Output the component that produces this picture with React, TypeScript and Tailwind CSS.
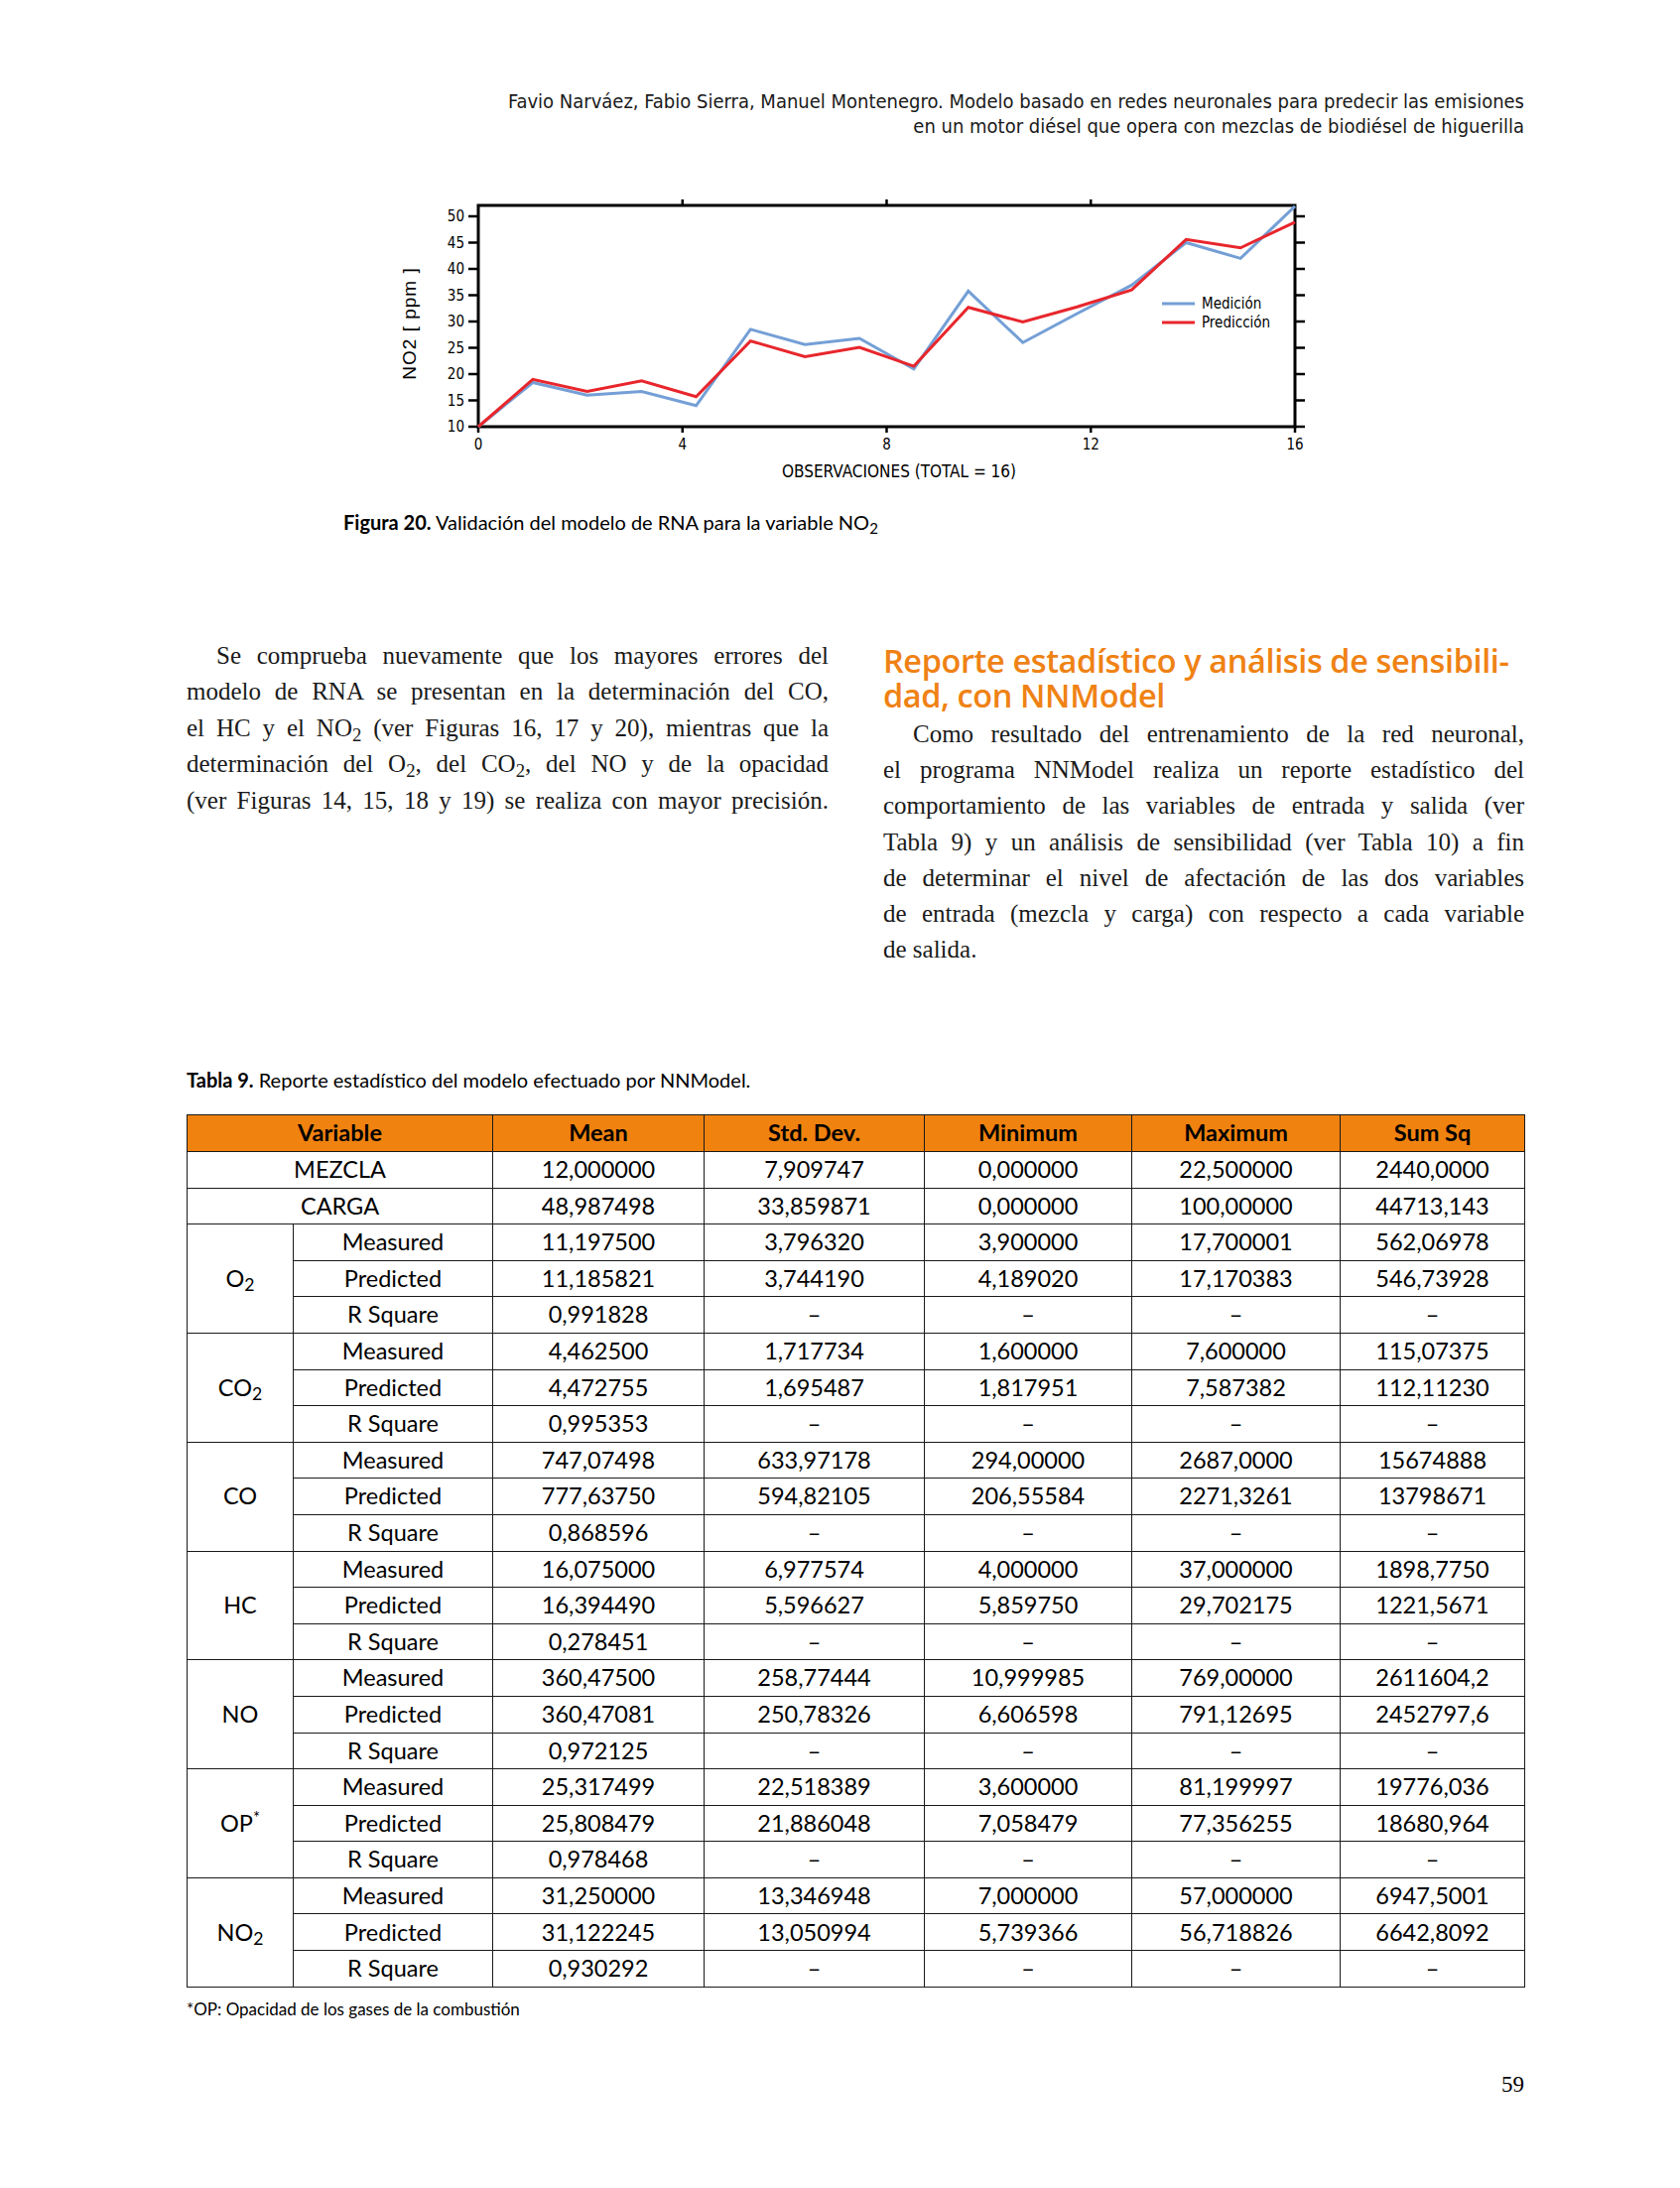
const narrow = "font-['Liberation_Sans_Narrow','DejaVu_Sans_Condensed','Roboto_Condensed',Lato,sans-serif]"

const medicion = [10, 18.4, 16.0, 16.7, 14.0, 28.5, 25.6, 26.8, 21.0, 35.8, 26.0, 31.5, 36.9, 45.0, 42.0, 51.9]
const prediccion = [10, 19.0, 16.7, 18.7, 15.7, 26.3, 23.3, 25.1, 21.5, 32.7, 29.9, 32.8, 36.0, 45.6, 44.0, 48.9]

const X0 = 102
const X1 = 925
const Y10 = 240
const PER = 5.3
const px = (i: number) => X0 + (i * (X1 - X0)) / 15
const py = (v: number) => Y10 - (v - 10) * PER
const pts = (d: number[]) => d.map((v, i) => `${px(i).toFixed(1)},${py(v).toFixed(1)}`).join(' ')

function Chart() {
  const yTicks = [10, 15, 20, 25, 30, 35, 40, 45, 50]
  const xTicks = [0, 4, 8, 12, 16]
  const xAt = (t: number) => X0 + (t / 16) * (X1 - X0)
  return (
    <svg width="960" height="300" viewBox="0 0 960 300" className="block">
      <rect x={X0} y={17} width={X1 - X0} height={Y10 - 17} fill="none" stroke="#000" strokeWidth="3" />
      {yTicks.map((t) => (
        <g key={t}>
          <line x1={X0 - 10} x2={X0} y1={py(t)} y2={py(t)} stroke="#000" strokeWidth="2.5" />
          <line x1={X1} x2={X1 + 10} y1={py(t)} y2={py(t)} stroke="#000" strokeWidth="2.5" />
          <text x={X0 - 14} y={py(t) + 5} textAnchor="end" fontSize="15" className={narrow}>
            {t}
          </text>
        </g>
      ))}
      {xTicks.map((t) => (
        <g key={t}>
          <line x1={xAt(t)} x2={xAt(t)} y1={Y10} y2={Y10 + 6} stroke="#000" strokeWidth="2.5" />
          {t > 0 && t < 16 && <line x1={xAt(t)} x2={xAt(t)} y1={11} y2={17} stroke="#000" strokeWidth="2.5" />}
          <text x={xAt(t)} y={Y10 + 23} textAnchor="middle" fontSize="15" className={narrow}>
            {t}
          </text>
        </g>
      ))}
      <polyline points={pts(medicion)} fill="none" stroke="#749fd6" strokeWidth="3" strokeLinejoin="miter" />
      <polyline points={pts(prediccion)} fill="none" stroke="#e8262c" strokeWidth="3" strokeLinejoin="miter" />
      <line x1={791} x2={824} y1={116} y2={116} stroke="#749fd6" strokeWidth="3" />
      <line x1={791} x2={824} y1={135} y2={135} stroke="#e8262c" strokeWidth="3" />
      <text x={831} y={121} fontSize="15" className={narrow}>Medición</text>
      <text x={831} y={140} fontSize="15" className={narrow}>Predicción</text>
      <text x={526} y={291} textAnchor="middle" fontSize="17" className={narrow}>
        OBSERVACIONES (TOTAL = 16)
      </text>
      <text
        x={34}
        y={136}
        textAnchor="middle"
        fontSize="19"
        letterSpacing="1"
        transform="rotate(-90 34 136)"
        dominantBaseline="middle"
        className="font-['Liberation_Sans',sans-serif]"
      >
        NO2 [ ppm ]
      </text>
    </svg>
  )
}

function Line({ children, last = false, indent = false }: { children: React.ReactNode; last?: boolean; indent?: boolean }) {
  return (
    <div className={`${last ? 'text-left' : 'text-justify [text-align-last:justify]'} ${indent ? 'pl-[30px]' : ''} whitespace-nowrap`}>
      {children}
    </div>
  )
}

type Row = [string, string, string, string, string, string]
const groups: { name: React.ReactNode; rows: Row[] }[] = [
  {
    name: (
      <>
        O<sub>2</sub>
      </>
    ),
    rows: [
      ['Measured', '11,197500', '3,796320', '3,900000', '17,700001', '562,06978'],
      ['Predicted', '11,185821', '3,744190', '4,189020', '17,170383', '546,73928'],
      ['R Square', '0,991828', '–', '–', '–', '–'],
    ],
  },
  {
    name: (
      <>
        CO<sub>2</sub>
      </>
    ),
    rows: [
      ['Measured', '4,462500', '1,717734', '1,600000', '7,600000', '115,07375'],
      ['Predicted', '4,472755', '1,695487', '1,817951', '7,587382', '112,11230'],
      ['R Square', '0,995353', '–', '–', '–', '–'],
    ],
  },
  {
    name: 'CO',
    rows: [
      ['Measured', '747,07498', '633,97178', '294,00000', '2687,0000', '15674888'],
      ['Predicted', '777,63750', '594,82105', '206,55584', '2271,3261', '13798671'],
      ['R Square', '0,868596', '–', '–', '–', '–'],
    ],
  },
  {
    name: 'HC',
    rows: [
      ['Measured', '16,075000', '6,977574', '4,000000', '37,000000', '1898,7750'],
      ['Predicted', '16,394490', '5,596627', '5,859750', '29,702175', '1221,5671'],
      ['R Square', '0,278451', '–', '–', '–', '–'],
    ],
  },
  {
    name: 'NO',
    rows: [
      ['Measured', '360,47500', '258,77444', '10,999985', '769,00000', '2611604,2'],
      ['Predicted', '360,47081', '250,78326', '6,606598', '791,12695', '2452797,6'],
      ['R Square', '0,972125', '–', '–', '–', '–'],
    ],
  },
  {
    name: (
      <>
        OP<sup className="text-[0.7em] -top-[0.5em]">*</sup>
      </>
    ),
    rows: [
      ['Measured', '25,317499', '22,518389', '3,600000', '81,199997', '19776,036'],
      ['Predicted', '25,808479', '21,886048', '7,058479', '77,356255', '18680,964'],
      ['R Square', '0,978468', '–', '–', '–', '–'],
    ],
  },
  {
    name: (
      <>
        NO<sub>2</sub>
      </>
    ),
    rows: [
      ['Measured', '31,250000', '13,346948', '7,000000', '57,000000', '6947,5001'],
      ['Predicted', '31,122245', '13,050994', '5,739366', '56,718826', '6642,8092'],
      ['R Square', '0,930292', '–', '–', '–', '–'],
    ],
  },
]

const td = 'border border-[#1a1a1a] h-[36.6px] p-0 text-center align-middle'

function App() {
  return (
    <div className="w-[1693px] h-[2205px] bg-white text-black">
      <div className="pl-[188px] pr-[157px] pt-[90px]">
        {/* running head */}
        <div className={`${narrow} text-right text-[20px] leading-[25px] text-[#1a1a1a]`}>
          <div>Favio Narváez, Fabio Sierra, Manuel Montenegro. Modelo basado en redes neuronales para predecir las emisiones</div>
          <div>en un motor diésel que opera con mezclas de biodiésel de higuerilla</div>
        </div>

        {/* figure */}
        <div className="mt-[50px] ml-[192px]">
          <Chart />
        </div>
        <div className="mt-[24px] ml-[158px] font-['Lato',sans-serif] text-[20px] leading-[24px]">
          <span className="font-bold">Figura 20.</span> Validación del modelo de RNA para la variable NO<sub>2</sub>
        </div>

        {/* two columns */}
        <div className="mt-[105px] flex gap-[55px] font-['Liberation_Serif',serif] text-[25px] leading-[36.4px] text-[#1a1a1a]">
          <div className="w-[647px]">
            <Line indent>Se comprueba nuevamente que los mayores errores del</Line>
            <Line>modelo de RNA se presentan en la determinación del CO,</Line>
            <Line>
              el HC y el NO<sub>2</sub> (ver Figuras 16, 17 y 20), mientras que la
            </Line>
            <Line>
              determinación del O<sub>2</sub>, del CO<sub>2</sub>, del NO y de la opacidad
            </Line>
            <Line>(ver Figuras 14, 15, 18 y 19) se realiza con mayor precisión.</Line>
          </div>
          <div className="w-[646px] pt-[5px]">
            <h2 className="whitespace-nowrap font-['Open_Sans',sans-serif] font-semibold text-[32.5px] leading-[35px] tracking-[-0.4px] text-[#ef8214]">
              <div>Reporte estadístico y análisis de sensibili-</div>
              <div>dad, con NNModel</div>
            </h2>
            <div className="mt-[4px] leading-[36.2px]">
              <Line indent>Como resultado del entrenamiento de la red neuronal,</Line>
              <Line>el programa NNModel realiza un reporte estadístico del</Line>
              <Line>comportamiento de las variables de entrada y salida (ver</Line>
              <Line>Tabla 9) y un análisis de sensibilidad (ver Tabla 10) a fin</Line>
              <Line>de determinar el nivel de afectación de las dos variables</Line>
              <Line>de entrada (mezcla y carga) con respecto a cada variable</Line>
              <Line last>de salida.</Line>
            </div>
          </div>
        </div>

        {/* table */}
        <div className="mt-[101px] font-['Lato',sans-serif] text-[20px] leading-[24px]">
          <span className="font-bold">Tabla 9.</span> Reporte estadístico del modelo efectuado por NNModel.
        </div>
        <table className="mt-[23px] w-[1348px] border-collapse table-fixed font-['Lato',sans-serif] text-[23.5px] leading-none">
          <colgroup>
            <col className="w-[107px]" />
            <col className="w-[201px]" />
            <col className="w-[213px]" />
            <col className="w-[222px]" />
            <col className="w-[209px]" />
            <col className="w-[210px]" />
            <col className="w-[186px]" />
          </colgroup>
          <thead>
            <tr className="bg-[#f0820f] font-bold">
              <th colSpan={2} className={td}>Variable</th>
              <th className={td}>Mean</th>
              <th className={td}>Std. Dev.</th>
              <th className={td}>Minimum</th>
              <th className={td}>Maximum</th>
              <th className={td}>Sum Sq</th>
            </tr>
          </thead>
          <tbody>
            <tr>
              <td colSpan={2} className={td}>MEZCLA</td>
              <td className={td}>12,000000</td>
              <td className={td}>7,909747</td>
              <td className={td}>0,000000</td>
              <td className={td}>22,500000</td>
              <td className={td}>2440,0000</td>
            </tr>
            <tr>
              <td colSpan={2} className={td}>CARGA</td>
              <td className={td}>48,987498</td>
              <td className={td}>33,859871</td>
              <td className={td}>0,000000</td>
              <td className={td}>100,00000</td>
              <td className={td}>44713,143</td>
            </tr>
            {groups.map((g, gi) =>
              g.rows.map((r, ri) => (
                <tr key={`${gi}-${ri}`}>
                  {ri === 0 && (
                    <td rowSpan={3} className={td}>
                      {g.name}
                    </td>
                  )}
                  {r.map((c, ci) => (
                    <td key={ci} className={td}>
                      {c}
                    </td>
                  ))}
                </tr>
              ))
            )}
          </tbody>
        </table>
        <div className="mt-[12px] font-['Lato',sans-serif] text-[17px] leading-[20px]">
          *OP: Opacidad de los gases de la combustión
        </div>
        <div className="mt-[53px] text-right font-['Liberation_Serif',serif] text-[23px] leading-[26px]">59</div>
      </div>
    </div>
  )
}

export default App
